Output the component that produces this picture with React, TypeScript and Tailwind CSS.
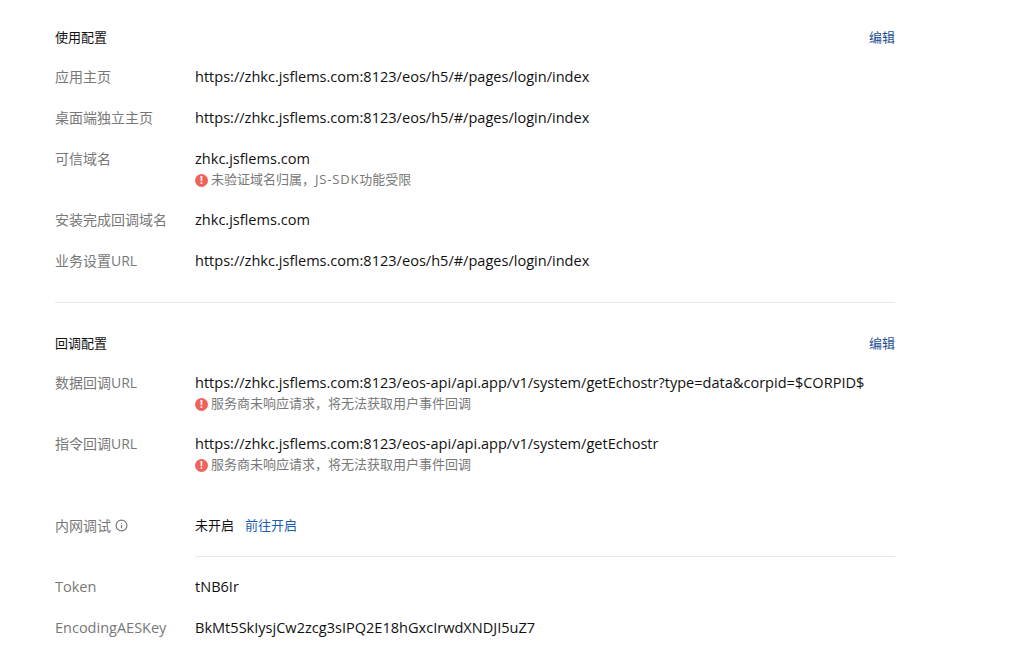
import { Info } from "lucide-react";

const HOME = "https://zhkc.jsflems.com:8123/eos/h5/#/pages/login/index";
const FONT = "font-['Open_Sans','Noto_Sans_CJK_SC',sans-serif]";

function Warn({ children }: { children: React.ReactNode }) {
  return (
    <div className="flex items-center gap-[3px] h-[20px] text-[13px] text-[#787878]">
      <span className="w-[13px] h-[13px] rounded-full bg-[#f0635c] text-white flex items-center justify-center text-[10px] leading-none font-bold">
        !
      </span>
      <span>{children}</span>
    </div>
  );
}

function Row({ label, value, warn }: { label: React.ReactNode; value: string; warn?: React.ReactNode }) {
  return (
    <div className="flex mb-[20px]">
      <div className="w-[140px] shrink-0 h-[20px] leading-[20px] text-[#787878]">{label}</div>
      <div>
        <div className="h-[21px] leading-[18px] text-[14.55px] text-[#111111]">{value}</div>
        {warn && <Warn>{warn}</Warn>}
      </div>
    </div>
  );
}

function Heading({ title }: { title: string }) {
  return (
    <div className="flex justify-between items-end h-[20px] mb-[20px] text-[13px]">
      <span className="text-[#111111]">{title}</span>
      <span className="text-[#1d4f91]">编辑</span>
    </div>
  );
}

const serviceWarn = "服务商未响应请求，将无法获取用户事件回调";

export default function App() {
  return (
    <div className={`${FONT} bg-white w-[1011px] h-[661px] overflow-hidden pl-[55px] pt-[27px] text-[14px]`}>
      <div className="w-[840px]">
        <Heading title="使用配置" />
        <Row label="应用主页" value={HOME} />
        <Row label="桌面端独立主页" value={HOME} />
        <Row
          label="可信域名"
          value="zhkc.jsflems.com"
          warn={
            <>
              未验证域名归属，<span className="tracking-[0.8px]">JS-SDK</span>功能受限
            </>
          }
        />
        <Row label="安装完成回调域名" value="zhkc.jsflems.com" />
        <Row label="业务设置URL" value={HOME} />
        <div className="h-px bg-[#e8e8e8] mt-[30px] mb-[30px]" />
        <Heading title="回调配置" />
        <Row
          label="数据回调URL"
          value="https://zhkc.jsflems.com:8123/eos-api/api.app/v1/system/getEchostr?type=data&corpid=$CORPID$"
          warn={serviceWarn}
        />
        <Row
          label="指令回调URL"
          value="https://zhkc.jsflems.com:8123/eos-api/api.app/v1/system/getEchostr"
          warn={serviceWarn}
        />
        <div className="h-[20px]" />
        <div className="flex h-[21px] items-center">
          <div className="w-[140px] shrink-0 flex items-center gap-[4px] text-[#787878]">
            内网调试 <Info size={13} strokeWidth={2.2} />
          </div>
          <div className="text-[13px] text-[#111111]">未开启</div>
          <div className="text-[13px] text-[#1a5fb4] ml-[11px]">前往开启</div>
        </div>
        <div className="ml-[140px] h-px bg-[#e8e8e8] mt-[20px] mb-[20px]" />
        <Row label={<span className="text-[14.5px]">Token</span>} value="tNB6Ir" />
        <Row label={<span className="text-[14.5px]">EncodingAESKey</span>} value="BkMt5SkIysjCw2zcg3sIPQ2E18hGxcIrwdXNDJI5uZ7" />
      </div>
    </div>
  );
}
